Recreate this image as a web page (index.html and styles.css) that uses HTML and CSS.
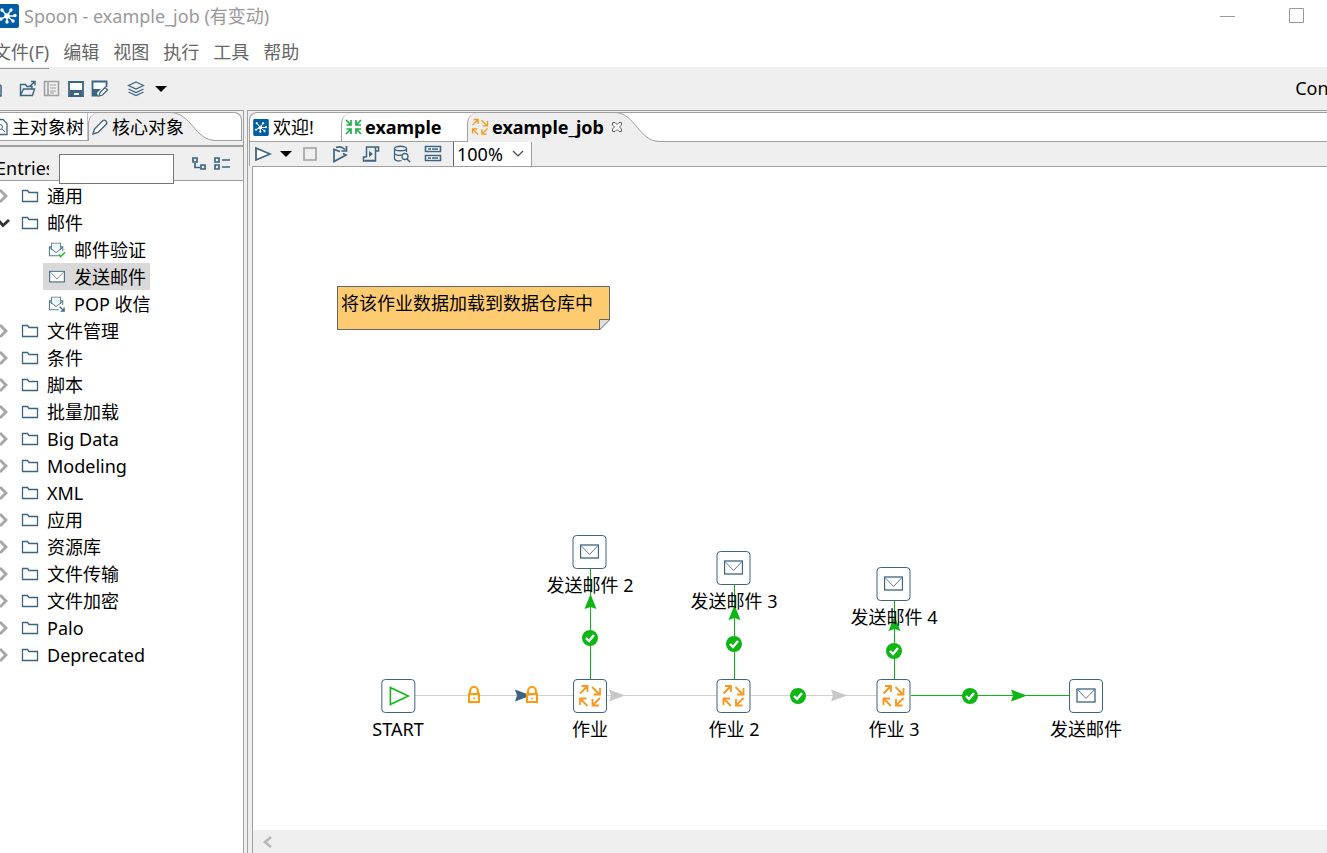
FILE: index.html
```html
<!DOCTYPE html>
<html lang="zh-CN">
<head>
<meta charset="utf-8">
<title>Spoon - example_job (有变动)</title>
<link rel="stylesheet" href="styles.css">
</head>
<body>
<svg class="defs" aria-hidden="true">
  <symbol id="logo" viewBox="0 0 22 24"><rect width="22" height="24" rx="2" fill="#005da6"/><g stroke="#fff" stroke-width="1.4" fill="#fff"><path d="M10 12 5 6M10 12l4-6M10 12h8M10 12l6 5M10 12v6M10 12l-6 3"/><circle cx="10" cy="12" r="2"/><circle cx="5" cy="6" r="1"/><circle cx="14" cy="6" r="1"/><circle cx="18" cy="11.500" r="1"/><circle cx="16" cy="17" r="1"/><circle cx="10" cy="18" r="1"/><circle cx="4" cy="15" r="1"/></g></symbol>
  <symbol id="folder" viewBox="0 0 18 16"><path d="M1.500 13.500v-11h5l1.500 2h8.500v9z" fill="#fff" stroke="#3d6480" stroke-width="1.300"/></symbol>
  <symbol id="mail" viewBox="0 0 20 16"><rect x="1" y="1" width="18" height="13" fill="#fff" stroke="#3d6480" stroke-width="1.300"/><path d="m1.500 1.500 8.500 9 8.500-9" fill="none" stroke="#5d7d94"/></symbol>
  <symbol id="openmail" viewBox="0 0 20 18"><path d="M4 5.500H1.500v10H12M14 5.500h2.500V10M4 9V1.500h10V9" fill="none" stroke="#5d7d94" stroke-width="1.200"/><path d="M4.500 2h9v6L9 11.500 4.500 8z" fill="#eef8ff"/><path d="m1.500 6 7.500 6 7.500-6" fill="none" stroke="#3d6480"/></symbol>
  <symbol id="job" viewBox="0 0 24 24"><path d="M2 9.500 9.500 2M3.500 2h6v6M14 3l7.500 7.500M22 4v6.500h-6.500M9.500 22 2 14.500M2 21v-6.500h6.500M22 14l-7.500 7.500M14.500 15v6.500H21" fill="none" stroke="#f8981d" stroke-width="1.800"/></symbol>
  <symbol id="check" viewBox="-8 -8 16 16"><circle r="8" fill="#0db614"/><path d="m-4 0 3 3 5-6" fill="none" stroke="#fff" stroke-width="2.400"/></symbol>
  <symbol id="lock" viewBox="0 0 14 18"><path d="M3 8V5a4 4 0 0 1 8 0v3" fill="none" stroke="#ff9b0b" stroke-width="2"/><rect x="2" y="8" width="10" height="8" fill="#fff" fill-opacity=".6" stroke="#ff9b0b" stroke-width="2"/><circle cx="7" cy="12.500" r="1" fill="#ff9b0b"/></symbol>
  <symbol id="play" viewBox="0 0 18 18"><path d="M2 3v12l14-6z" fill="#fff" stroke="#3d6480" stroke-width="1.800"/></symbol>
  <symbol id="caret" viewBox="0 0 12 7"><path d="M0 0h12L6 6z"/></symbol>
  <symbol id="right" viewBox="0 0 10 16"><path d="m0 2 6 6-6 6" fill="none" stroke="#a6a6a6" stroke-width="2.800"/></symbol>
</svg>
<div class="app">
  <header class="titlebar">
    <svg class="app-logo"><use href="#logo"/></svg>
    <h1>Spoon - example_job (有变动)</h1>
    <button class="window-btn" aria-label="最小化"><svg width="16" height="16"><path d="M0 8.500h15" stroke="#999"/></svg></button>
    <button class="window-btn" aria-label="最大化"><svg width="16" height="16"><path d="M.5.5h14v14H.5z" fill="none" stroke="#999"/></svg></button>
  </header>
  <nav class="menubar">
    <button class="opened">文件(F)</button><button>编辑</button><button>视图</button><button>执行</button><button>工具</button><button>帮助</button>
  </nav>
  <div class="toolbar">
    <button aria-label="新建"><svg width="16" height="18"><path d="M2 2h8l4 4v10H2z" fill="#fff" stroke="#3d6480" stroke-width="1.500"/></svg></button>
    <button aria-label="打开"><svg width="18" height="18"><path d="M1.500 16V4.500h5l1.500 2h5V9M1.500 15.500l3-6.500h11l-2 6.500zM11 6l5-4.500M12 1.500h4v4" fill="none" stroke="#3d6480" stroke-width="1.400"/></svg></button>
    <button aria-label="资源库"><svg width="18" height="18"><path d="M1.500 1.500h14v14h-14zM5 2v13" fill="none" stroke="#a0a0a0" stroke-width="1.600"/><path d="M7 5h6M7 8h6M7 11h6M7 13h4" stroke="#a0a0a0"/></svg></button>
    <button aria-label="保存"><svg width="18" height="18"><path d="M2 2h14v14H2z" fill="#f8fbfc" stroke="#3d6480" stroke-width="1.800"/><path d="M3 10h12v6h-3v-3H7v3H3z" fill="#3d6480"/></svg></button>
    <button aria-label="另存为"><svg width="18" height="18"><path d="M7 15.500H1.500v-14h14V7" fill="#f8fbfc" stroke="#3d6480" stroke-width="1.800"/><path d="M2 9h8l-4 4v3H2z" fill="#3d6480"/><path d="m8 16 1-3.500 5-5 2.500 2.500-5 5z" fill="#fff" stroke="#3d6480" stroke-width="1.300"/></svg></button>
    <button class="perspective" aria-label="视角"><svg width="18" height="18"><path d="m9 2 7.500 3.500L9 9 1.500 5.500zM1.500 9 9 12.500 16.500 9M1.500 12 9 15.500l7.500-3.500" fill="none" stroke="#3d6480" stroke-width="1.200"/></svg></button>
    <button aria-label="选择视角"><svg width="12" height="7"><use href="#caret"/></svg></button>
    <button class="connect">Connect</button>
  </div>
  <main class="workspace">
    <aside class="sidebar">
      <div class="tabs side-tabs">
        <button class="tab tree-tab"><svg width="14" height="18"><path d="M1 1.500h8l4 4v11H1z" fill="#fff" stroke="#3d6480" stroke-width="1.300"/><circle cx="6" cy="9" r="2.500" fill="none" stroke="#3d6480"/><path d="m8 11 3 3" stroke="#3d6480"/></svg>主对象树</button>
        <button class="tab active core-tab"><svg width="18" height="18"><path d="m2 16 1.500-5L12 2.500q1.500-1 3 .5t.5 3L7 14.500z" fill="#fff" stroke="#3d6480" stroke-width="1.400"/></svg>核心对象<svg class="swoop" viewBox="0 0 46 29"><path d="M0 29V.5C22 .5 24 28.500 46 28.500V29z" fill="#efefef"/><path d="M0 .5C22 .5 24 28.500 46 28.500" fill="none" stroke="#a0a0a0"/></svg></button>
      </div>
      <form class="filter">
        <label for="entries">Entries</label>
        <input id="entries" type="text">
        <button type="button" aria-label="展开全部"><svg width="16" height="16"><path d="M2 2h4v4H2zM10 9h4v4h-4zM4 7v4.500h5" fill="none" stroke="#3d6480" stroke-width="1.700"/></svg></button>
        <button type="button" aria-label="折叠全部"><svg width="18" height="16"><path d="M2 2h4v4H2zM2 9h4v4H2zM9 4h8M9 11h8" fill="none" stroke="#3d6480" stroke-width="1.700"/></svg></button>
      </form>
      <ul class="tree">
        <li><svg class="arrow"><use href="#right"/></svg><svg class="icon"><use href="#folder"/></svg>通用</li>
        <li><svg class="arrow" viewBox="0 0 10 16"><path d="M-1 6 3 10.500 9 5" fill="none" stroke="#333" stroke-width="2.800"/></svg><svg class="icon"><use href="#folder"/></svg>邮件</li>
        <li class="child"><span><svg class="icon" viewBox="0 0 20 18"><use href="#openmail" width="20" height="18"/><path d="m12 14 2 2.500 5-5" fill="none" stroke="#0db614" stroke-width="1.500"/></svg>邮件验证</span></li>
        <li class="child"><span class="selected"><svg class="icon" viewBox="-1 -1 22 18"><use href="#mail" width="20" height="16"/></svg>发送邮件</span></li>
        <li class="child"><span><svg class="icon" viewBox="0 0 20 18"><use href="#openmail" width="20" height="18"/><path d="m13 12 5 5M14 17h4v-4" fill="none" stroke="#3d6480" stroke-width="1.500"/></svg>POP 收信</span></li>
        <li><svg class="arrow"><use href="#right"/></svg><svg class="icon"><use href="#folder"/></svg>文件管理</li>
        <li><svg class="arrow"><use href="#right"/></svg><svg class="icon"><use href="#folder"/></svg>条件</li>
        <li><svg class="arrow"><use href="#right"/></svg><svg class="icon"><use href="#folder"/></svg>脚本</li>
        <li><svg class="arrow"><use href="#right"/></svg><svg class="icon"><use href="#folder"/></svg>批量加载</li>
        <li><svg class="arrow"><use href="#right"/></svg><svg class="icon"><use href="#folder"/></svg>Big Data</li>
        <li><svg class="arrow"><use href="#right"/></svg><svg class="icon"><use href="#folder"/></svg>Modeling</li>
        <li><svg class="arrow"><use href="#right"/></svg><svg class="icon"><use href="#folder"/></svg>XML</li>
        <li><svg class="arrow"><use href="#right"/></svg><svg class="icon"><use href="#folder"/></svg>应用</li>
        <li><svg class="arrow"><use href="#right"/></svg><svg class="icon"><use href="#folder"/></svg>资源库</li>
        <li><svg class="arrow"><use href="#right"/></svg><svg class="icon"><use href="#folder"/></svg>文件传输</li>
        <li><svg class="arrow"><use href="#right"/></svg><svg class="icon"><use href="#folder"/></svg>文件加密</li>
        <li><svg class="arrow"><use href="#right"/></svg><svg class="icon"><use href="#folder"/></svg>Palo</li>
        <li><svg class="arrow"><use href="#right"/></svg><svg class="icon"><use href="#folder"/></svg>Deprecated</li>
      </ul>
    </aside>
    <section class="editor">
      <div class="tabs editor-tabs">
        <button class="tab welcome-tab"><svg width="16" height="17"><use href="#logo"/></svg>欢迎!</button>
        <button class="tab file-tab"><svg width="17" height="18" viewBox="0 0 17 18"><path d="M1 2l5 5M1.500 7H6V2M16 2l-5 5M11 2v5h5M1 16l5-5M1.500 11H6v5M16 16l-5-5M11 16v-5h5" fill="none" stroke="#1fae49" stroke-width="1.700"/></svg>example</button>
        <button class="tab active job-tab"><svg width="18" height="18"><use href="#job"/></svg>example_job<svg class="close" width="12" height="12"><path d="m1.500 1.500 2.500 0 2 2 2-2h2.500v2.500l-2 2 2 2v2.500H8l-2-2-2 2H1.500V8l2-2-2-2z" fill="#fff" stroke="#666"/></svg><svg class="swoop" viewBox="0 0 46 30"><path d="M0 30V.5C22 .5 24 29.500 46 29.500V30z" fill="#efefef"/><path d="M0 .5C22 .5 24 29.500 46 29.500" fill="none" stroke="#a0a0a0"/></svg></button>
      </div>
      <div class="job-toolbar">
        <button aria-label="运行"><svg width="18" height="18"><use href="#play"/></svg></button>
        <button class="narrow" aria-label="运行选项"><svg width="12" height="7"><use href="#caret"/></svg></button>
        <button class="narrow" aria-label="停止"><svg width="14" height="14"><path d="M1 1h12v12H1z" fill="none" stroke="#a0a0a0" stroke-width="1.600"/></svg></button>
        <button aria-label="重放"><svg width="18" height="18"><path d="M9 6.500 3 4.500v12l12-6.500-3-1.500M5 2.500q5-2 9 2M15.500 1v5h-5" fill="none" stroke="#3d6480" stroke-width="1.700"/></svg></button>
        <button aria-label="生成脚本"><svg width="18" height="18"><path d="M4.500 12V2h12v4h-3v10h-12v-4h3M13.500 6V2M3 15.500h10" fill="none" stroke="#3d6480" stroke-width="1.500"/><path d="M7 6v6l4-3z" fill="#3d6480"/></svg></button>
        <button aria-label="浏览数据库"><svg width="18" height="18"><path d="M1.500 3.500v10c0 3 6 2.500 7 2M13.500 7V3.500c0-3-12-3-12 0s12 3 12 0M1.500 8.500c1 2 5 2 7 1.500" fill="none" stroke="#3d6480" stroke-width="1.300"/><circle cx="12" cy="11.500" r="3" fill="#fff" stroke="#3d6480" stroke-width="1.300"/><path d="m14 14 3 3" stroke="#3d6480" stroke-width="1.500"/></svg></button>
        <button aria-label="显示结果"><svg width="18" height="18"><path d="M1.500 1.500h15v5h-15zM1.500 10.500h15v5h-15z" fill="#fff" stroke="#3d6480" stroke-width="1.600"/><path d="M4 4h3M8 4h6M4 13h3M8 13h6" stroke="#3d6480" stroke-width="1.500"/></svg></button>
        <span class="zoom"><select aria-label="缩放"><option>100%</option></select><svg width="12" height="8"><path d="m1 1 5 5 5-5" fill="none" stroke="#444" stroke-width="1.200"/></svg></span>
      </div>
      <div class="canvas">
        <svg class="hops">
          <g fill="none" stroke="#d0d0d0" shape-rendering="crispEdges"><path d="M162 528.500h158M354 528.500h110M498 528.500h126"/></g>
          <g fill="none" stroke="#0db614" shape-rendering="crispEdges"><path d="M658 528.500h158M337.500 402v110M481.500 418v94M641.500 434v78"/></g>
          <g fill="#0db614"><path d="m337.500 427 6 15-6-2-6 2zM481.500 438l6 15-6-2-6 2zM641.500 449l6 15-6-2-6 2zM774 528.500l-16-6 2 6-2 6z"/></g>
          <path d="m372 528.500-16-6 2 6-2 6zM594 528.500l-16-6 2 6-2 6z" fill="#c8c8c8"/>
          <path d="m278 528.500-16-6 2 6-2 6z" fill="#3d6480"/>
          <use href="#lock" x="214" y="519" width="14" height="18"/>
          <use href="#lock" x="272" y="519" width="14" height="18"/>
          <use href="#check" x="329" y="463" width="16" height="16"/>
          <use href="#check" x="473" y="469" width="16" height="16"/>
          <use href="#check" x="633" y="476" width="16" height="16"/>
          <use href="#check" x="537" y="521" width="16" height="16"/>
          <use href="#check" x="709" y="521" width="16" height="16"/>
        </svg>
        <p class="note">将该作业数据加载到数据仓库中<svg width="11" height="11"><path d="M0 0h11v11H0z" fill="#fff"/><path d="M.5 11V.5H11z" fill="#dedede" stroke="#666"/></svg></p>
        <div class="node start"><svg viewBox="0 0 24 24"><path d="M4 3.500v17l18-8.500z" fill="none" stroke="#0db614" stroke-width="1.500"/></svg><span>START</span></div>
        <div class="node job1"><svg><use href="#job"/></svg><span>作业</span></div>
        <div class="node job2"><svg><use href="#job"/></svg><span>作业 2</span></div>
        <div class="node job3"><svg><use href="#job"/></svg><span>作业 3</span></div>
        <div class="node mail1"><svg><use href="#mail"/></svg><span>发送邮件</span></div>
        <div class="node mail2"><svg><use href="#mail"/></svg><span>发送邮件 2</span></div>
        <div class="node mail3"><svg><use href="#mail"/></svg><span>发送邮件 3</span></div>
        <div class="node mail4"><svg><use href="#mail"/></svg><span>发送邮件 4</span></div>
      </div>
      <div class="scrollbar"><button aria-label="向左滚动"><svg width="10" height="12"><path d="M9 1 3 6l6 5" fill="none" stroke="#b8b8b8" stroke-width="2.500"/></svg></button></div>
    </section>
  </main>
</div>
</body>
</html>
```
FILE: styles.css
```css
* { box-sizing: border-box; }
body { margin: 0; font: 18px/24px "Noto Sans", "Noto Sans CJK SC", sans-serif; color: #000; background: #fff; }
button, input, select { font: inherit; color: inherit; }
button { padding: 0; border: 0; background: none; display: flex; align-items: center; white-space: nowrap; }
svg { display: block; flex: none; }
.defs { position: absolute; width: 0; height: 0; }
.app { display: flex; flex-direction: column; height: 100vh; overflow: hidden; }

.titlebar { display: flex; align-items: center; height: 31px; padding-right: 22px; color: #999; }
.titlebar h1 { flex: 1; margin: 0 0 0 5px; font-size: 18px; font-weight: 400; }
.app-logo { width: 22px; height: 24px; margin-left: -3px; }
.window-btn + .window-btn { margin-left: 53px; }

.menubar { display: flex; gap: 14px; height: 36px; margin-left: -7px; padding-top: 6px; color: #666; }
.menubar button { height: 30px; }
.menubar .opened { height: 32px; padding-bottom: 1px; border-bottom: 1px solid #999; position: relative; }

.toolbar { display: flex; align-items: center; gap: 6px; height: 43px; padding-top: 1px; background: #efefef; }
.toolbar button:first-child { margin-left: -13px; margin-right: 10px; }
.toolbar .perspective { margin-left: 12px; margin-right: 4px; }
.toolbar .connect { margin-left: auto; margin-right: -38px; padding-bottom: 2px; }

.workspace { flex: 1; display: flex; gap: 3px; min-height: 0; background: #efefef; }
.sidebar { display: flex; flex-direction: column; width: 244px; border-top: 1px solid #a0a0a0; border-right: 1px solid #a0a0a0; }

.tabs { display: flex; height: 29px; margin-top: 1px; background: #fff; border-top: 1px solid #a0a0a0; border-bottom: 1px solid #a0a0a0; }
.tab { position: relative; height: 27px; gap: 4px; }
.tab.active { z-index: 1; height: 28px; padding-bottom: 1px; background: #efefef; border-left: 1px solid #a0a0a0; border-top-left-radius: 10px; }
.swoop { position: absolute; z-index: -1; top: -1px; left: 100%; width: 46px; height: 29px; }

.side-tabs { margin-right: 1px; border-right: 1px solid #a0a0a0; border-top-right-radius: 8px; }
.tree-tab { margin-left: -6px; width: 94px; border-right: 1px solid #c0c0c0; }
.core-tab { gap: 3px; width: 85px; padding-left: 2px; }
.core-tab .swoop { left: 81px; }

.filter { display: flex; align-items: center; height: 36px; margin-top: 4px; border-top: 2px solid #a0a0a0; border-bottom: 1px solid #a0a0a0; }
.filter label { width: 53px; margin-left: -4px; padding-top: 8px; overflow: hidden; white-space: nowrap; }
.filter input { align-self: flex-start; width: 115px; height: 30px; margin-top: 7px; margin-left: 10px; margin-right: 17px; padding: 0 4px; border: 1px solid #777; background: #fff; position: relative; z-index: 1; }
.filter button + button { margin-left: 6px; }

.tree { flex: 1; margin: 0; padding: 1px 0 0; list-style: none; background: #fff; overflow: hidden; }
.tree li { display: flex; align-items: center; height: 27px; }
.arrow { width: 10px; height: 16px; margin-right: 11px; }
.icon { width: 18px; height: 16px; margin-right: 8px; }
.child { padding-left: 43px; }
.child span { display: flex; align-items: center; height: 27px; padding: 0 4px 0 5px; }
.child .selected { background: #d9d9d9; }

.editor { flex: 1; min-width: 0; display: flex; flex-direction: column; border-top: 1px solid #a0a0a0; border-left: 1px solid #a0a0a0; }
.editor-tabs { margin-left: 1px; height: 30px; border-left: 1px solid #a0a0a0; border-top-left-radius: 8px; }
.editor-tabs .tab { gap: 3px; height: 28px; padding-left: 3px; }
.editor-tabs .tab.active { height: 29px; }
.editor-tabs .swoop { height: 30px; }
.editor-tabs .welcome-tab { gap: 4px; width: 91px; }
.file-tab { width: 126px; border-left: 1px solid #a0a0a0; border-top-left-radius: 10px; }
.file-tab, .job-tab { font-weight: 700; }
.job-tab { width: 150px; }
.job-tab .close { margin-left: 4px; }
.job-tab .swoop { left: 146px; }

.job-toolbar { display: flex; align-items: center; gap: 13px; height: 24px; padding-left: 4px; margin-left: 1px; border-left: 1px solid #a0a0a0; }
.job-toolbar .narrow { margin-left: -5px; margin-right: -2px; }
.job-toolbar .narrow + .narrow { margin-left: 0; margin-right: 1px; }
.zoom { display: flex; align-items: center; height: 24px; width: 79px; margin-left: -2px; padding-right: 7px; border-left: 1px solid #666; border-right: 1px solid #a0a0a0; background: #fff; }
.zoom select { flex: 1; min-width: 0; height: 24px; padding: 0 0 2px 3px; border: 0; background: none; appearance: none; }

.canvas { position: relative; flex: 1; margin-left: 4px; overflow: hidden; background: #fff; border-top: 1px solid #a0a0a0; border-left: 1px solid #a0a0a0; }
.hops { position: absolute; inset: 0; width: 100%; height: 100%; }
.note { position: absolute; left: 84px; top: 119px; width: 273px; height: 44px; margin: 0; padding: 4px 3px; background: #ffcb70; border: 1px solid #666; white-space: nowrap; }
.note svg { position: absolute; right: -1px; bottom: -1px; }
.node { position: absolute; display: flex; flex-direction: column; align-items: center; gap: 4px; transform: translateX(-50%); white-space: nowrap; }
.node svg { width: 34px; height: 34px; padding: 4px; background: #fff; border: 1px solid #3d6480; border-radius: 4px; }
.start { left: 145px; top: 512px; }
.job1 { left: 337px; top: 512px; }
.job2 { left: 481px; top: 512px; }
.job3 { left: 641px; top: 512px; }
.mail1 { left: 833px; top: 512px; }
.mail2 { left: 337px; top: 368px; }
.mail3 { left: 481px; top: 384px; }
.mail4 { left: 641px; top: 400px; }
.node[class*="mail"] svg { padding: 6px; }

.scrollbar { display: flex; align-items: center; height: 23px; margin-left: 4px; padding-left: 9px; border-left: 1px solid #a0a0a0; }
```
